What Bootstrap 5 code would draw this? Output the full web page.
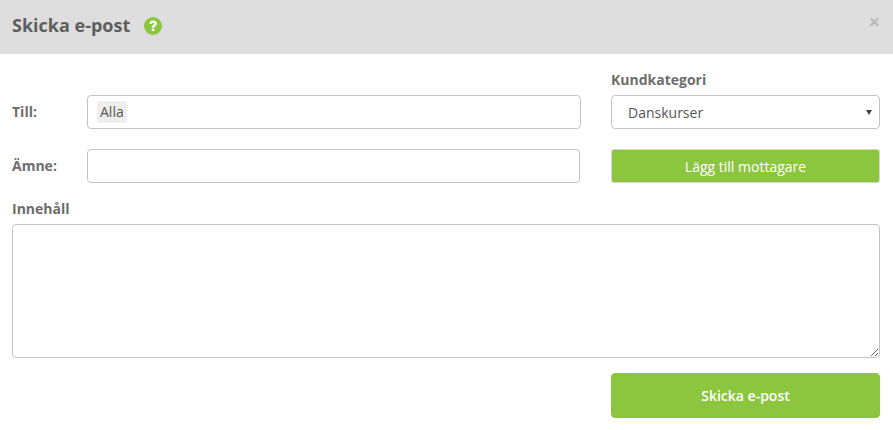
<!DOCTYPE html>
<html>
  <head>
    <title>Skicka e-post</title>
    <link href="https://cdn.jsdelivr.net/npm/bootstrap@5.3.3/dist/css/bootstrap.min.css" rel="stylesheet">
    <script src="https://cdn.jsdelivr.net/npm/bootstrap@5.3.3/dist/js/bootstrap.bundle.min.js"></script>
    <style>
      body {
        font-family: "Open Sans", sans-serif;
        font-size: 14px;
        color: #6d6d6d;
        background: #fff;
        overflow: hidden;
      }
      .mail-head {
        height: 54px;
        background: #dedede;
        padding: 0 12px 2px;
      }
      .mail-title {
        font-size: 18px;
        font-weight: 700;
        color: #5e5e5e;
        margin: 0;
      }
      .help-mark {
        width: 18px;
        height: 18px;
        margin-left: 14px;
      }
      .close-x {
        position: absolute;
        top: 12px;
        right: 13px;
        font-size: 20px;
        font-weight: 700;
        line-height: 1;
        color: #b9b9b9;
      }
      .mail-body {
        padding: 15px 13px 0 12px;
      }
      .mail-label {
        font-weight: 700;
        color: #6d6d6d;
        margin: 0;
      }
      .to-label {
        width: 75px;
        flex: none;
        position: relative;
        top: -1px;
      }
      .cat-label {
        margin-bottom: 5px;
      }
      .side-col {
        width: 269px;
        flex: none;
        margin-left: 30px;
      }
      .mail-input {
        height: 34px;
        border: 1px solid #c4c4c4;
        border-radius: 4px;
        background: #fff;
      }
      .subject-input {
        margin-right: 1px;
      }
      .to-tag {
        background: #eeeeee;
        color: #555;
        padding: 0 3px;
        line-height: 22px;
        border-radius: 2px;
        margin-left: 9px;
      }
      .cat-select {
        height: 34px;
        border: 1px solid #c4c4c4;
        border-radius: 4px;
        color: #555;
        padding: 0 16px;
        font-size: 14px;
        background-image: url("data:image/svg+xml,%3csvg xmlns='http://www.w3.org/2000/svg' viewBox='0 0 6 5'%3e%3cpath fill='%23444' d='M0 0h6L3 5z'/%3e%3c/svg%3e");
        background-size: 6px 5px;
        background-position: right 7px center;
      }
      .green-btn {
        background: #8cc63f;
        border: 1px solid #8cc63f;
        color: #fff;
        font-size: 14px;
        border-radius: 3px;
      }
      .add-btn {
        height: 34px;
        padding: 0;
        font-weight: 400;
        border-color: #d4d4d4;
      }
      .send-row {
        margin-top: 15px;
      }
      .send-btn {
        width: 269px;
        height: 45px;
        font-weight: 600;
        border-radius: 4px;
      }
      .content-area {
        margin-top: 5px;
      }
      .content-label {
        margin-top: 15px;
      }
      .mail-area {
        height: 134px;
        border: 1px solid #c4c4c4;
        border-radius: 4px;
      }
    </style>
  </head>
  <body>
    <!-- Header -->
    <div class="mail-head d-flex align-items-center position-relative">
      <h1 class="mail-title">Skicka e-post</h1>
      <svg class="help-mark" viewBox="0 0 18 18">
        <circle cx="9" cy="9" r="9" fill="#8cc63f"/>
        <path d="M5.400 6.800C5.500 4.700 7 3.400 9.200 3.400c2.200 0 3.700 1.300 3.700 3.100 0 2.400-2.500 2.500-2.500 4.200H7.800c0-2.800 2.400-2.900 2.400-4 0-.6-.4-1-1.100-1-.8 0-1.200.5-1.300 1.300z" fill="#fff"/>
        <rect x="7.800" y="11.600" width="2.600" height="2.500" fill="#fff"/>
      </svg>
      <span class="close-x">×</span>
    </div>

    <div class="mail-body">
      <!-- Till row -->
      <div class="d-flex align-items-end">
        <div class="d-flex align-items-center flex-grow-1">
          <label class="mail-label to-label">Till:</label>
          <div class="mail-input flex-grow-1 d-flex align-items-center"><span class="to-tag">Alla</span></div>
        </div>
        <div class="side-col">
          <label class="mail-label cat-label d-block">Kundkategori</label>
          <select class="form-select cat-select">
            <option>Danskurser</option>
          </select>
        </div>
      </div>

      <!-- Amne row -->
      <div class="d-flex align-items-center mt-3 pt-1">
        <div class="d-flex align-items-center flex-grow-1">
          <label class="mail-label to-label">Ämne:</label>
          <input class="form-control mail-input subject-input" type="text">
        </div>
        <div class="side-col">
          <button class="btn green-btn add-btn w-100">Lägg till mottagare</button>
        </div>
      </div>

      <!-- Content -->
      <label class="mail-label content-label d-block">Innehåll</label>
      <textarea class="form-control mail-area content-area"></textarea>

      <div class="d-flex justify-content-end send-row">
        <button class="btn green-btn send-btn">Skicka e-post</button>
      </div>
    </div>
  </body>
</html>
